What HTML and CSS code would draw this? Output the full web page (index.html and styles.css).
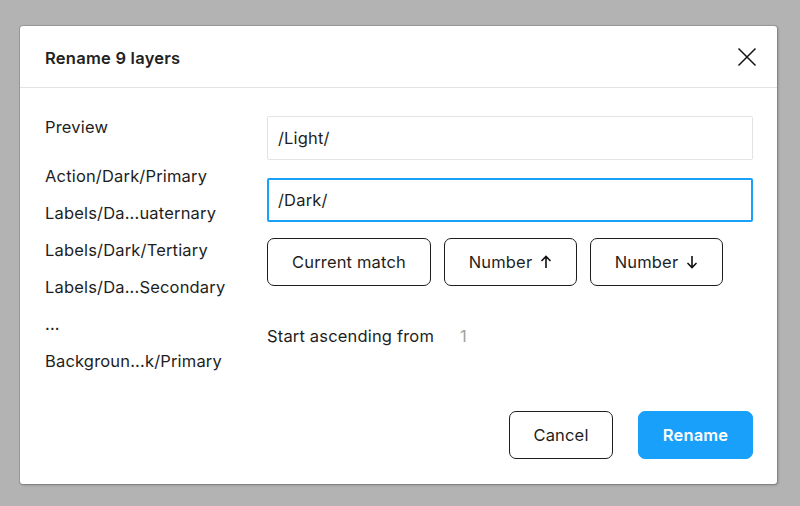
FILE: index.html
```
<!DOCTYPE html>
<html>
<head>
<meta charset="utf-8">
<link rel="stylesheet" href="styles.css">
</head>
<body>
<div class="dialog">
  <div class="header">
    <div class="title">Rename 9 layers</div>
    <svg class="close" width="20" height="20" viewBox="0 0 20 20"><path d="M1.5 1.5 L18.5 18.5 M18.5 1.5 L1.5 18.5" stroke="#111" stroke-width="1.5" fill="none"/></svg>
  </div>
  <div class="body">
    <div class="preview">
      <div class="preview-label">Preview</div>
      <div class="items">
        <div class="item">Action/Dark/Primary</div>
        <div class="item">Labels/Da...uaternary</div>
        <div class="item">Labels/Dark/Tertiary</div>
        <div class="item">Labels/Da...Secondary</div>
        <div class="item">...</div>
        <div class="item">Backgroun...k/Primary</div>
      </div>
    </div>
    <div class="form">
      <div class="input">/Light/</div>
      <div class="input focused">/Dark/</div>
      <div class="chips">
        <div class="btn chip">Current match</div>
        <div class="btn chip num">Number <svg width="12" height="14" viewBox="0 0 12 14"><path d="M6 13 V1.5 M1.5 6 L6 1.5 L10.5 6" stroke="#111" stroke-width="1.6" fill="none"/></svg></div>
        <div class="btn chip num">Number <svg width="12" height="14" viewBox="0 0 12 14"><path d="M6 1 V12.5 M1.5 8 L6 12.5 L10.5 8" stroke="#111" stroke-width="1.6" fill="none"/></svg></div>
      </div>
      <div class="start"><span>Start ascending from</span><span class="start-num">1</span></div>
    </div>
  </div>
  <div class="footer">
    <div class="btn cancel">Cancel</div>
    <div class="btn primary">Rename</div>
  </div>
</div>
</body>
</html>
```
FILE: styles.css
```
html, body {
  margin: 0;
  padding: 0;
}
body {
  width: 800px;
  height: 506px;
  background: #b3b3b3;
  font-family: Inter, "Noto Sans", sans-serif;
  font-size: 16.5px;
  letter-spacing: 0.17px;
  color: #1e1e1e;
  overflow: hidden;
}
.dialog {
  margin: 26px 0 0 20px;
  width: 757px;
  height: 458px;
  box-sizing: border-box;
  background: #fff;
  border-radius: 3px;
  box-shadow: 0 0 0 1px rgba(0,0,0,0.12), 1px 1px 3px rgba(0,0,0,0.25);
  display: flex;
  flex-direction: column;
}
.header {
  height: 62px;
  box-sizing: border-box;
  border-bottom: 1px solid #e2e2e2;
  display: flex;
  align-items: center;
  justify-content: space-between;
  padding: 2px 20px 0 25px;
}
.title {
  font-weight: 600;
  letter-spacing: 0.25px;
  color: #222;
}
.close {
  display: block;
  margin-top: -2px;
}
.body {
  display: grid;
  grid-template-columns: 222px 1fr;
  padding: 28px 24px 0 25px;
}
.preview-label {
  line-height: 20px;
  margin-top: 1px;
}
.items {
  margin-top: 21px;
}
.item {
  line-height: 37px;
  white-space: nowrap;
}
.form {
  display: flex;
  flex-direction: column;
}
.input {
  height: 44px;
  box-sizing: border-box;
  border: 1px solid #e3e3e3;
  border-radius: 2px;
  padding: 0 10px;
  display: flex;
  align-items: center;
}
.input.focused {
  margin-top: 18px;
  border: 2px solid #18a0fb;
  padding: 0 9px;
  height: 44px;
}
.chips {
  display: flex;
  gap: 13px;
  margin-top: 16px;
}
.btn {
  height: 48px;
  box-sizing: border-box;
  border: 1px solid #1e1e1e;
  border-radius: 7px;
  display: flex;
  align-items: center;
  justify-content: center;
}
.chip {
  width: 164px;
  padding: 0;
}
.num {
  width: 133px;
  padding: 0;
  gap: 8px;
}
.num svg {
  display: block;
}
.start {
  margin-top: 40px;
  line-height: 20px;
  display: flex;
}
.start-num {
  margin-left: 26px;
  color: #a0a0a0;
}
.footer {
  margin-top: auto;
  padding: 0 24px 25px 0;
  display: flex;
  justify-content: flex-end;
  gap: 25px;
}
.cancel {
  width: 104px;
}
.primary {
  width: 115px;
  background: #18a0fb;
  border-color: #18a0fb;
  color: #fff;
  font-weight: 600;
}
```
